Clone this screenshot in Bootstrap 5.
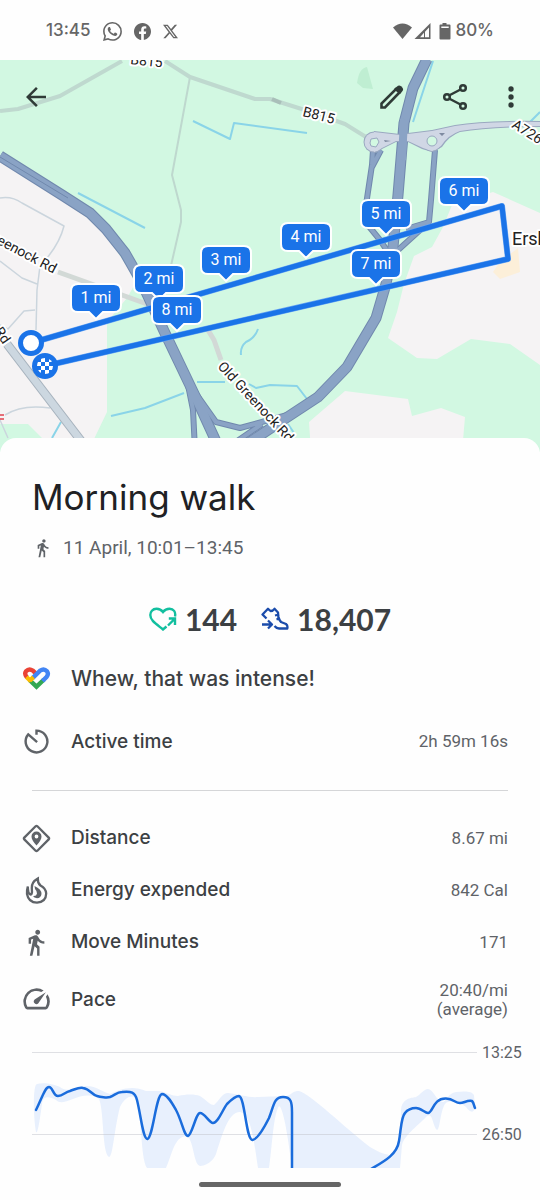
<!DOCTYPE html>
<html lang="en">
<head>
<meta charset="utf-8">
<meta name="viewport" content="width=device-width, initial-scale=1">
<title>Morning walk</title>
<link href="https://cdn.jsdelivr.net/npm/bootstrap@5.3.0/dist/css/bootstrap.min.css" rel="stylesheet">
<style>
  body { background: #fefefe; color: #3c4043; font-family: Roboto, "Liberation Sans", sans-serif; }
  svg { display: block; flex-shrink: 0; }
  .status-bar { height: 60px; padding: 2px 46px 0; color: #666; font-family: Inter, Roboto, sans-serif; font-size: 17px; font-weight: 500; }
  .status-apps { gap: 12px; }
  .map-view { background: #d2f8e2; }
  .map-view text { font-family: Roboto, sans-serif; }
  .road-name { fill: #222; stroke: #fff; stroke-width: 4px; paint-order: stroke; stroke-linejoin: round; font-size: 14px; }
  .town-name { font-size: 18px; }
  .mile-tag text { fill: #fff; font-size: 16px; text-anchor: middle; }
  .map-tools { padding: 14px 5px 0 12px; }
  .map-tools .btn { width: 48px; height: 46px; color: #2f3b37; }
  .sheet { position: relative; margin-top: -14px; padding-top: 35px; border-radius: 16px 16px 0 0; background: #fefefe; }
  .sheet-title { font-family: Inter, Roboto, sans-serif; font-size: 35px; line-height: 48px; color: #202124; padding: 0 32px; }
  .sheet-date { margin-top: 15px; padding: 0 32px; font-size: 19px; line-height: 24px; color: #5f6368; }
  .totals { margin-top: 39px; height: 40px; gap: 24px; font-family: Lato, Roboto, sans-serif; font-size: 30px; font-weight: 700; }
  .metrics { margin: 0; }
  .metric { min-height: 52px; padding: 0 32px 0 22px; gap: 20px; color: #5f6368; }
  .metric.tall { min-height: 63px; }
  .metric dt, .remark { font-family: Inter, Roboto, sans-serif; font-size: 19px; font-weight: 500; color: #3c4043; }
  .metric dt { line-height: 24px; }
  .remark { font-size: 21px; }
  .metric dd { margin: 0; font-size: 17px; line-height: 19px; text-align: right; }
  .divider { margin: 17px 32px 21px; border-top: 1px solid #d5d6d8; opacity: 1; }
  .pace-chart { margin-top: 9px; }
  .pace-chart text { font-family: Roboto, sans-serif; font-size: 16px; fill: #5f6368; }
  .home-bar { padding: 14px 0 13px; }
  .home-bar span { width: 142px; height: 5px; background: #666; }
</style>
</head>
<body>
<header class="status-bar d-flex align-items-center justify-content-between">
  <div class="status-apps d-flex align-items-center">
    <span>13:45</span>
    <svg width="19" height="19" viewBox="0 0 16 16" fill="currentColor"><path d="M13.601 2.326A7.85 7.85 0 0 0 7.994 0C3.627 0 .068 3.558.064 7.926c0 1.399.366 2.76 1.057 3.965L0 16l4.204-1.102a7.9 7.9 0 0 0 3.79.965h.004c4.368 0 7.926-3.558 7.93-7.93A7.9 7.9 0 0 0 13.6 2.326zM7.994 14.521a6.6 6.6 0 0 1-3.356-.92l-.24-.144-2.494.654.666-2.433-.156-.251a6.56 6.56 0 0 1-1.007-3.505c0-3.626 2.957-6.584 6.591-6.584a6.56 6.56 0 0 1 4.66 1.931 6.56 6.56 0 0 1 1.928 4.66c-.004 3.639-2.961 6.592-6.592 6.592m3.615-4.934c-.197-.099-1.17-.578-1.353-.646-.182-.065-.315-.099-.445.099-.133.197-.513.646-.627.775-.114.133-.232.148-.43.05-.197-.1-.836-.308-1.592-.985-.59-.525-.985-1.175-1.103-1.372-.114-.198-.011-.304.088-.403.087-.088.197-.232.296-.346.1-.114.133-.198.198-.33.065-.134.034-.248-.015-.347-.05-.099-.445-1.076-.612-1.47-.16-.389-.323-.335-.445-.34-.114-.007-.247-.007-.38-.007a.73.73 0 0 0-.529.247c-.182.198-.691.677-.691 1.654s.71 1.916.81 2.049c.098.133 1.394 2.132 3.383 2.992.47.205.84.326 1.129.418.475.152.904.129 1.246.08.38-.058 1.171-.48 1.338-.943.164-.464.164-.86.114-.943-.049-.084-.182-.133-.38-.232"/></svg>
    <svg width="17" height="17" viewBox="0 0 16 16" fill="currentColor"><path d="M16 8.049c0-4.446-3.582-8.05-8-8.05C3.58 0-.002 3.603-.002 8.05c0 4.017 2.926 7.347 6.75 7.951v-5.625h-2.03V8.05H6.75V6.275c0-2.017 1.195-3.131 3.022-3.131.876 0 1.791.157 1.791.157v1.98h-1.009c-.993 0-1.303.621-1.303 1.258v1.51h2.218l-.354 2.326H9.25V16c3.824-.604 6.75-3.934 6.75-7.951"/></svg>
    <svg width="15" height="15" viewBox="0 0 16 16" fill="currentColor"><path d="M12.6.75h2.454l-5.36 6.142L16 15.25h-4.937l-3.867-5.07-4.425 5.07H.316l5.733-6.57L0 .75h5.063l3.495 4.633L12.601.75Zm-.86 13.028h1.36L4.323 2.145H2.865z"/></svg>
  </div>
  <div class="d-flex align-items-center">
    <svg width="58" height="17" viewBox="0 0 58 17" fill="currentColor">
      <path d="M0 4.500Q9.500-3.500 19 4.500L9.500 16Z"/>
      <path fill-rule="evenodd" d="M21.500 16 37.500 0V16ZM27 14.300H31V9.800ZM32 14.300H36V4.500L32 8.700Z"/>
      <path fill-rule="evenodd" d="M49.500 0h4v1.500h3q1 0 1 1V15.500q0 1-1 1h-9q-1 0-1-1V2.500q0-1 1-1h2ZM48.300 3.500V5h7.400V3.500Z"/>
    </svg>
    <span class="ms-1">80%</span>
  </div>
</header>

<main>
  <section class="map-view position-relative overflow-hidden">
    <svg class="w-100 h-auto" viewBox="0 60 540 392" role="img" aria-label="Route map">
      <rect y="60" width="540" height="392" fill="#d2f8e2"/>
      <!-- built-up areas -->
      <g fill="#f5f3f4">
        <path d="M0 160 82 213 107 236 128 268 135 284 127 298 107 322V412L94 439V452H56L28 424H0Z"/>
        <path d="M493 192 540 213V365L510 344 471 339 437 359 417 358 388 338 397 312 404 284 414 256 432 247 443 227 452 205Z"/>
        <path d="M345 391 408 399 412 416 441 408 465 417 462 452H311L309 422Z"/>
      </g>
      <path d="M493 272 500 262 518 248 520 272 500 279Z" fill="#fcefd9"/>
      <path d="M357 83Q359 68 367 67L373 89 363 88Z" fill="#bfeed2"/>
      <!-- streams -->
      <g fill="none" stroke="#8ad4e8" stroke-width="2" stroke-linejoin="round">
        <path d="M193 121 230 139 234 123 307 133M78 193 145 228M433 61 413 122M529 123 540 112M111 416 145 408 184 393M197 382H225M258 329Q255 338 246 342 240 347 241 355M249 384 256 388 270 385 297 386 307 399M52 438 61 422M288 424 296 436"/>
      </g>
      <!-- minor roads -->
      <g fill="none" stroke-linejoin="round">
        <path d="M190 77 172 175 181 210 181 222 170 270" stroke="#bed8ce" stroke-width="2"/>
        <path d="M0 198Q12 196 22 203L64 226Q59 246 40 266L37 290 36 330M0 261 22 278 37 284M0 325 8 329 24 311 35 310M5 415Q22 404 50 408M0 420 8 438" stroke="#cbd5dd" stroke-width="1.500"/>
        <path d="M0 111 18 109 60 96 122 61M165 61 190 77 255 99 270 99 308 111 345 124 366 137" stroke="#bfd9cf" stroke-width="4"/>
        <path d="M58 272 147 304M208 330 214 340 221 360" stroke="#d2d9d6" stroke-width="5"/>
        <path d="M272 99 281 103" stroke="#a9bfb9" stroke-width="4"/>
        <path d="M7 344 85 446" stroke="#a6b2bd" stroke-width="9"/><path d="M7 344 85 446" stroke="#ccd7e0" stroke-width="7"/>
      </g>
      <!-- slip roads and motorways: dark casing, then the surface -->
      <g fill="none" stroke-linejoin="round">
        <g stroke="#7088ad">
          <path stroke-width="6" d="M373 150 372 165 366 205 367 224 380 240 388 252M381 150 372 167M435 150 431 200 429 222 397 251M429 222 406 229M188 385 193 410 195 450M192 388 216 422 240 428 291 414M230 446 262 424"/>
          <path stroke-width="11" d="M0 156 62 195 90 213 106 229 125 253 141 281 164 331 197 400 219 448M427 59 413 88 404 123 398 195 393 247 386 284 376 318 347 367 318 397 283 420 250 442"/>
        </g>
        <path stroke="#8aa3c5" stroke-width="4" d="M373 150 372 165 366 205 367 224 380 240 388 252M381 150 372 167M435 150 431 200 429 222 397 251M429 222 406 229M188 385 193 410 195 450M192 388 216 422 240 428 291 414M230 446 262 424"/>
        <path stroke="#8aa3c5" stroke-width="9" d="M0 156 62 195 90 213 106 229 125 253 141 281 164 331 197 400 219 448M427 59 413 88 404 123 398 195 393 247 386 284 376 318 347 367 318 397 283 420 250 442"/>
        <path stroke="#7088ad" stroke-width="1" d="M0 157 68 198"/>
      </g>
      <!-- A726 and its roundabouts -->
      <g fill="#9aa8c0">
        <circle cx="374" cy="142" r="10.500"/><circle cx="432" cy="141" r="10.500"/>
        <path d="M374 131 400 134 432 130 455 125Q485 120 540 121V127Q490 127 460 132 449 136 442 147L432 152 422 149 408 142 396 142 374 153Z"/>
      </g>
      <g fill="#d0d7e5">
        <circle cx="374" cy="142" r="9.500"/><circle cx="432" cy="141" r="9.500"/>
        <path d="M374 132 400 135 432 131 455 126Q485 121 540 122V126Q490 126 460 131 448 135 441 146L432 151 423 148 408 141 396 141 374 152Z"/>
      </g>
      <path d="M370 143 371 139 377 138 379 142 376 147 371 146Z" fill="#d2f8e2" stroke="#9aa8c0"/>
      <circle cx="432" cy="141" r="5" fill="#d2f8e2" stroke="#9aa8c0"/>
      <path d="M384 140 391 141 385 142ZM439 133 445 133 442 136Z" fill="#7e8aa0"/>
      <path d="M404 119 402 160" stroke="#8aa3c5" stroke-width="8"/>
      <!-- names -->
      <g class="road-name">
        <text transform="translate(130 64) rotate(6)">B815</text>
        <text transform="translate(302 116) rotate(14)">B815</text>
        <text transform="translate(511 127) rotate(32)">A726</text>
        <text transform="translate(-8 241) rotate(28)">reenock Rd</text>
        <text transform="translate(217 367) rotate(47)">Old Greenock Rd</text>
        <text transform="translate(-6 331) rotate(56)">Rd</text>
        <text class="town-name" x="512" y="245">Ersk</text>
      </g>
      <path d="M0 415H4M0 419H4" stroke="#e0434f" stroke-width="1.500"/>
      <!-- route -->
      <path d="M31 343 502 206 508 259 45 366" fill="none" stroke="#6ba6f2" stroke-width="6" stroke-linejoin="round"/>
      <path d="M31 343 502 206 508 259 45 366" fill="none" stroke="#1a73e8" stroke-width="5" stroke-linejoin="round"/>
      <circle cx="31" cy="343" r="10.500" fill="#fff" stroke="#1a73e8" stroke-width="5"/>
      <circle cx="45" cy="366" r="13" fill="#1a73e8"/>
      <clipPath id="flag"><circle cx="45" cy="366" r="8"/></clipPath>
      <path clip-path="url(#flag)" fill="#fff" d="M37 362h4v-4h4v4h4v-4h4v4h-4v4h4v4h-4v4h-4v-4h-4v4h-4v-4h4v-4h-4ZM41 362v4h4v-4ZM45 366v4h4v-4Z" fill-rule="evenodd"/>
      <!-- mile tags -->
      <defs><path id="tag" d="M-18-1H18Q25-1 25 6V20Q25 27 18 27H7L0 34-7 27H-18Q-25 27-25 20V6Q-25-1-18-1Z" fill="#1a73e8" stroke="#fff" stroke-width="2"/></defs>
      <g class="mile-tag">
        <g transform="translate(96 285)"><use href="#tag"/><text y="18">1 mi</text></g>
        <g transform="translate(159 266)"><use href="#tag"/><text y="18">2 mi</text></g>
        <g transform="translate(226 247)"><use href="#tag"/><text y="18">3 mi</text></g>
        <g transform="translate(306 224)"><use href="#tag"/><text y="18">4 mi</text></g>
        <g transform="translate(386 201)"><use href="#tag"/><text y="18">5 mi</text></g>
        <g transform="translate(464 178)"><use href="#tag"/><text y="18">6 mi</text></g>
        <g transform="translate(376 251)"><use href="#tag"/><text y="18">7 mi</text></g>
        <g transform="translate(177 297)"><use href="#tag"/><text y="18">8 mi</text></g>
      </g>
    </svg>
    <div class="map-tools position-absolute top-0 start-0 end-0 d-flex">
      <button type="button" class="btn border-0 p-0 d-flex align-items-center justify-content-center me-auto" aria-label="Back"><svg width="30" height="30" viewBox="0 0 24 24" fill="currentColor"><path d="M20 11H7.830l5.590-5.590L12 4l-8 8 8 8 1.410-1.410L7.830 13H20v-2z"/></svg></button>
      <button type="button" class="btn border-0 p-0 d-flex align-items-center justify-content-center me-3" aria-label="Edit"><svg width="26" height="26" viewBox="0 0 26 26"><path d="M3.500 23.500V19.500L18 5 21.500 8.500 7 23.500Z" fill="none" stroke="currentColor" stroke-width="2.600"/><path d="M16 5 20 1.800Q21.500 1 23 2.200L24.500 3.800Q25.700 5.300 24.700 6.800L22 10Z" fill="currentColor"/></svg></button>
      <button type="button" class="btn border-0 p-0 d-flex align-items-center justify-content-center me-2" aria-label="Share"><svg width="26" height="28" viewBox="0 0 26 28" fill="none" stroke="currentColor" stroke-width="2.500"><path d="M7 12.500 18.500 6.500M7 15.500 18.500 21.500"/><circle cx="5" cy="14" r="2.800"/><circle cx="21" cy="5" r="2.800"/><circle cx="21" cy="23" r="2.800"/></svg></button>
      <button type="button" class="btn border-0 p-0 d-flex align-items-center justify-content-center" aria-label="More options"><svg width="6" height="24" viewBox="0 0 6 24" fill="currentColor"><circle cx="3" cy="4" r="2.700"/><circle cx="3" cy="12" r="2.700"/><circle cx="3" cy="20" r="2.700"/></svg></button>
    </div>
  </section>

  <section class="sheet">
    <h1 class="sheet-title mb-0 fw-normal">Morning walk</h1>
    <p class="sheet-date mb-0 d-flex align-items-center">
      <svg class="me-2" width="23" height="20" viewBox="0 0 26 24" fill="currentColor"><path d="M13.500 5.500c1.100 0 2-.9 2-2s-.9-2-2-2-2 .9-2 2 .9 2 2 2zM9.800 8.900L7 23h2.100l1.800-8 2.100 2v6h2v-7.500l-2.100-2 .6-3C14.800 12 16.800 13 19 13v-2c-1.900 0-3.500-1-4.300-2.400l-1-1.600c-.4-.6-1-1-1.700-1-.3 0-.5.1-.8.1L6 8.300V13h2V9.600l1.800-.7z"/></svg>
      11 April, 10:01–13:45
    </p>

    <div class="totals d-flex align-items-center justify-content-center">
      <span class="d-flex align-items-center gap-2">
        <svg width="28" height="24" viewBox="0 0 28 24" fill="none" stroke="#12bf9f" stroke-width="2.400"><path d="M26 9.500C27 5 24.500 1.700 20.500 1.700 17.500 1.700 15.500 3 14 5 12.500 3 10.500 1.700 7.500 1.700 3.500 1.700 1.300 5 1.300 8 1.300 13 6 16 14 22.500L17.500 19.500"/><path d="M19 18.500 25.500 12M19.800 11.500H26V18"/></svg>
        <span>144</span>
      </span>
      <span class="d-flex align-items-center gap-2">
        <svg width="28" height="24" viewBox="0 0 28 24" fill="none" stroke="#1b4cab" stroke-width="2.300" stroke-linejoin="round"><path d="M5.500 11.500 1.500 7.500 7 1.800 9.500 4Q12 4 13.500 1.800L17 5.500 17.500 11.500 20 15 25 17Q27 18.500 26.300 21.500H18Q15.500 21.500 13.500 19"/><path d="M14 8.500 18 7.500M15.500 12.500 19 11M1 17.500H10.500M7 13.500 11 17.500 7 21.500"/></svg>
        <span>18,407</span>
      </span>
    </div>

    <div class="metric tall d-flex align-items-center mt-2">
      <svg width="29" height="24" viewBox="-1 0 29 24" fill="none" stroke-width="4.400">
        <path stroke="#34a853" d="M6.500 13 13.500 19.700 21 12.500"/>
        <path stroke="#ea4335" d="M4 10.500Q1 7 3 4.300 6 1 9.700 3.500L13.500 7.200"/>
        <path stroke="#4285f4" d="M19.500 14 23.500 10Q26 7 24 4.300 21 1 17.300 3.500L9.800 10.800"/>
        <path stroke="#fbbc04" d="M3.500 10 7.800 14.200M10.400 10.200 6.500 13.800"/>
      </svg>
      <span class="remark">Whew, that was intense!</span>
    </div>
    <dl class="metrics">
      <div class="metric tall d-flex align-items-center">
        <svg width="29" height="29" viewBox="0 0 24 24" fill="none" stroke="currentColor" stroke-width="2"><path d="M12 6.500V3A9 9 0 1 1 5.200 6.100L12.500 12.500"/></svg>
        <dt class="me-auto">Active time</dt><dd>2h 59m 16s</dd>
      </div>
    </dl>
    <hr class="divider">
    <dl class="metrics">
      <div class="metric d-flex align-items-center">
        <svg width="29" height="29" viewBox="0 0 29 29"><path d="M13.600 2.300 2.300 13.600Q1.500 14.500 2.300 15.400L13.600 26.700Q14.500 27.500 15.400 26.700L26.700 15.400Q27.500 14.500 26.700 13.600L15.400 2.300Q14.500 1.500 13.600 2.300Z" fill="none" stroke="currentColor" stroke-width="2.300"/><path fill="currentColor" fill-rule="evenodd" d="M14.500 21.500Q9.500 16 9.500 12.500A5 5 0 0 1 19.500 12.500Q19.500 16 14.500 21.500ZM14.500 10.600A1.900 1.900 0 1 0 14.500 14.400 1.900 1.900 0 0 0 14.500 10.600Z"/></svg>
        <dt class="me-auto">Distance</dt><dd>8.67 mi</dd>
      </div>
      <div class="metric d-flex align-items-center">
        <svg width="29" height="29" viewBox="0 0 29 29" fill="none" stroke="currentColor" stroke-width="2.300"><path d="M5.800 10.500Q4.700 14 5 18 6.500 26.500 15 26.700 24 26 24.200 17.500 24 12.500 18.500 9.500 15.500 7 15.800 2.500 9.500 6 9.800 12L10 16Q9.700 18.500 8.500 18.500 6 18 5.800 10.500Z"/><path fill="currentColor" stroke="none" d="M12.500 10Q19.500 13 19.500 18 19 22 15 22.300 12 22 11 20 14.500 20.500 15 17.500 15 15 13 13Z"/></svg>
        <dt class="me-auto">Energy expended</dt><dd>842 Cal</dd>
      </div>
      <div class="metric d-flex align-items-center">
        <svg width="29" height="31" viewBox="0.500 0 24 24" fill="currentColor"><path d="M13.500 5.500c1.100 0 2-.9 2-2s-.9-2-2-2-2 .9-2 2 .9 2 2 2zM9.800 8.900L7 23h2.100l1.800-8 2.100 2v6h2v-7.500l-2.100-2 .6-3C14.800 12 16.800 13 19 13v-2c-1.900 0-3.500-1-4.300-2.400l-1-1.600c-.4-.6-1-1-1.700-1-.3 0-.5.1-.8.1L6 8.300V13h2V9.600l1.800-.7z"/></svg>
        <dt class="me-auto">Move Minutes</dt><dd>171</dd>
      </div>
      <div class="metric tall d-flex align-items-center">
        <svg width="29" height="29" viewBox="1 1.500 22 22" fill="currentColor"><path d="M20.380 8.570l-1.230 1.850a8 8 0 0 1-.22 7.580H5.070A8 8 0 0 1 15.580 6.850l1.850-1.230A10 10 0 0 0 3.350 19a2 2 0 0 0 1.720 1h13.850a2 2 0 0 0 1.740-1 10 10 0 0 0-.27-10.440zm-9.790 6.840a2 2 0 0 0 2.830 0l5.660-8.490-8.490 5.660a2 2 0 0 0 0 2.830z"/></svg>
        <dt class="me-auto">Pace</dt><dd>20:40/mi<br>(average)</dd>
      </div>
    </dl>

    <svg class="pace-chart w-100 h-auto" viewBox="0 1040 540 128" role="img" aria-label="Pace over time">
      <path fill="#e8f0fd" d="M36 1132C33 1115 33 1084 37 1084 45 1082 55 1085 60 1087 67 1093 75 1087 86 1086 97 1086 104 1093 110 1094 120 1089 133 1085 146 1091L160 1091C168 1093 172 1096 178 1096 186 1094 195 1094 200 1096 206 1100 210 1105 214 1105 219 1101 222 1093 228 1093 238 1094 250 1098 258 1097L285 1096C291 1096 293 1090 299 1091 312 1095 345 1128 370 1147 380 1153 386 1155 392 1155 400 1140 401 1130 401 1110 402 1097 413 1098 416 1097 420 1095 424 1089 428 1089 434 1090 436 1101 443 1102 446 1102 448 1093 456 1092 465 1091 472 1091 474 1095L475 1108C473 1114 470 1112 466 1107 458 1100 448 1100 445 1104 440 1112 440 1130 437 1130 433 1128 433 1112 427 1116 420 1124 404 1135 402 1145L400 1168H292C289 1145 284 1108 279 1106 273 1115 272 1150 269 1168H258C255 1150 252 1113 240 1112 228 1112 222 1136 216 1154 213 1162 205 1166 200 1166 193 1164 194 1138 186 1136 174 1137 172 1155 166 1168H147C140 1158 142 1108 136 1098 130 1094 124 1099 120 1107 114 1130 113 1157 109 1157 102 1154 104 1110 99 1099 92 1093 80 1096 73 1099 65 1102 60 1104 56 1100 48 1096 43 1096 42 1104 40 1118 38 1135 36 1132Z"/>
      <path d="M32 1052.500H477M32 1134.500H477" stroke="#bfc2c9" stroke-opacity=".5"/>
      <path fill="none" stroke="#1a6cdc" stroke-width="2.500" stroke-linecap="round" stroke-linejoin="round" d="M36 1110C42 1098 45 1087 49 1087 53 1087 53 1096 58 1096 63 1096 65 1092 70 1091 76 1089 79 1087 83 1088 90 1089 92 1095 97 1096 100 1097 107 1098 110 1097 115 1095 117 1092 122 1092 131 1091 135 1092 137 1100 141 1116 143 1139 147.500 1139 153 1137 156 1095 162 1094 167 1094 172 1103 176 1110 182 1121 184 1136 188 1136 192 1135 196 1113 200 1113 205 1113 209 1123 213 1123 218 1123 223 1109 227 1104 231 1100 235 1096 239 1096 245 1097 246 1140 252.500 1140 258 1139 265 1126 269 1118 274 1105 274 1097 283 1097 291 1097 292 1102 292 1112V1170M371 1169C383 1162 397 1155 399 1141 401 1130 401 1117 405 1113 408 1109 411 1108 416 1108 421 1108 425 1113 428 1113 433 1113 433 1098 446 1098.500 454 1099 455 1103 460 1103 464 1103 467 1100 472 1101 474 1103 474 1106 475 1108"/>
      <text x="482" y="1058">13:25</text>
      <text x="482" y="1140">26:50</text>
    </svg>
  </section>
</main>
<footer class="home-bar d-flex justify-content-center"><span class="rounded-pill"></span></footer>
<script src="https://cdn.jsdelivr.net/npm/bootstrap@5.3.0/dist/js/bootstrap.bundle.min.js"></script>
</body>
</html>
